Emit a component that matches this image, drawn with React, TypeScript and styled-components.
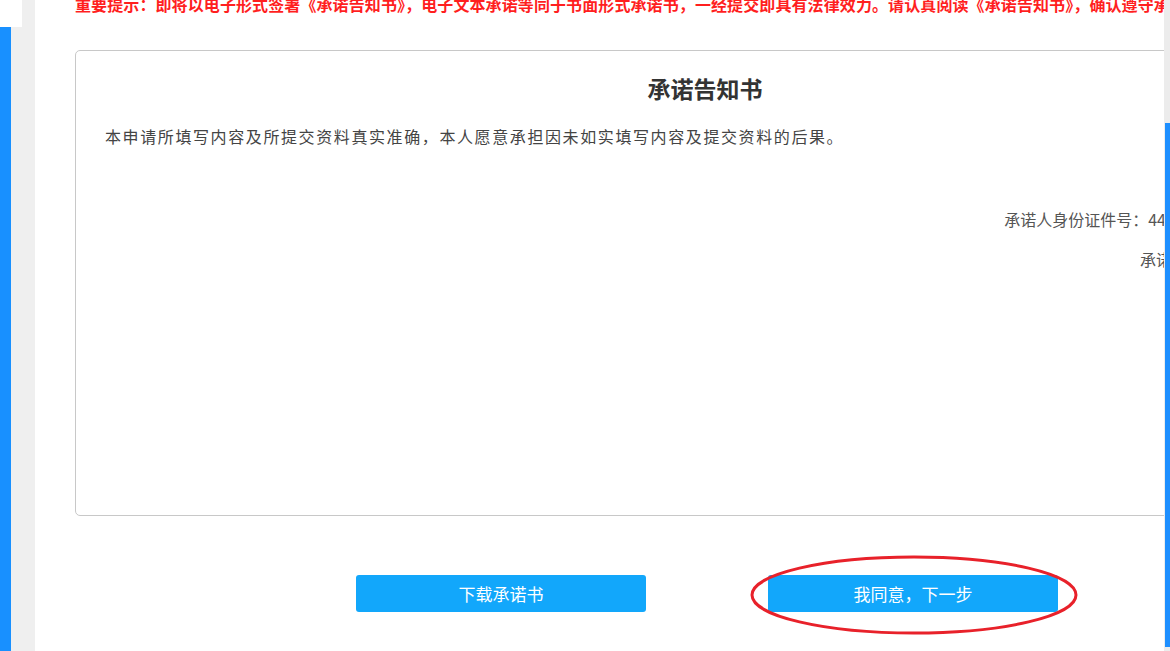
import React from "react";
import styled, { createGlobalStyle } from "styled-components";

const GlobalStyle = createGlobalStyle`
  html, body {
    margin: 0;
    padding: 0;
    overflow: hidden;
    background: #fff;
  }
  body {
    font-family: "Noto Sans CJK SC", "Noto Sans", sans-serif;
  }
`;

const Page = styled.div`
  display: flex;
  height: 651px;
  overflow: hidden;
`;

const Sidebar = styled.aside`
  width: 35px;
  flex-shrink: 0;
  display: flex;
  flex-direction: column;
  background-color: #efefef;
`;

const SideTop = styled.div`
  width: 22px;
  height: 27px;
  background-color: #fff;
`;

const SideAccent = styled.div`
  width: 11px;
  flex: 1;
  background-color: #1890ff;
`;

const Main = styled.main`
  position: relative;
  flex: 1;
  min-width: 0;
  background-color: #fff;
  overflow: hidden;
`;

const Content = styled.div`
  width: 1340px;
  padding: 0 40px;
  box-sizing: border-box;
`;

const Notice = styled.div`
  margin-top: -8px;
  height: 58px;
  font-size: 16px;
  line-height: 24px;
  font-weight: 700;
  letter-spacing: 0.1px;
  color: #ff1f1f;
  white-space: nowrap;
`;

const Card = styled.section`
  height: 466px;
  box-sizing: border-box;
  border: 1px solid #c8c8c8;
  border-radius: 5px;
  padding: 0 29px;
`;

const Title = styled.h2`
  margin: 21px 0 0;
  text-align: center;
  font-size: 23px;
  line-height: 32px;
  font-weight: 700;
  color: #333;
`;

const Statement = styled.p`
  margin: 19px 0 0;
  font-size: 16px;
  line-height: 26px;
  letter-spacing: 1.6px;
  color: #444;
`;

const Signature = styled.div`
  margin: 50px -3px 0 0;
  text-align: right;
  font-size: 16px;
  line-height: 40px;
  color: #555;
`;

const Blank = styled.span`
  display: inline-block;
  width: 48px;
`;

const Actions = styled.div`
  display: flex;
  justify-content: center;
  gap: 122px;
  margin-top: 59px;
  padding-left: 4px;
`;

const ActionButton = styled.button`
  width: 290px;
  height: 37px;
  border: none;
  border-radius: 3px;
  background-color: #12a7fb;
  color: #fff;
  font-family: "Noto Sans CJK SC", sans-serif;
  font-size: 17px;
  cursor: pointer;
`;

const Highlight = styled.svg`
  position: absolute;
  left: 715px;
  top: 555px;
  pointer-events: none;
`;

const Scrollbar = styled.div`
  width: 6px;
  flex-shrink: 0;
  background-color: #ececec;
  padding-top: 123px;
  box-sizing: border-box;
`;

const Thumb = styled.div`
  width: 5px;
  margin-left: 1px;
  height: 524px;
  background-color: #1e8fff;
`;

const App: React.FC = () => {
  return (
    <>
      <GlobalStyle />
      <Page>
        <Sidebar>
          <SideTop />
          <SideAccent />
        </Sidebar>
        <Main>
          <Content>
            <Notice>
              重要提示：即将以电子形式签署《承诺告知书》，电子文本承诺等同于书面形式承诺书，一经提交即具有法律效力。请认真阅读《承诺告知书》，确认遵守承诺的各项内容。
            </Notice>
            <Card>
              <Title>承诺告知书</Title>
              <Statement>
                本申请所填写内容及所提交资料真实准确，本人愿意承担因未如实填写内容及提交资料的后果。
              </Statement>
              <Signature>
                <div>承诺人身份证件号：441302199001011234</div>
                <div>
                  承诺人（签字）：<Blank />
                </div>
              </Signature>
            </Card>
            <Actions>
              <ActionButton>下载承诺书</ActionButton>
              <ActionButton>我同意，下一步</ActionButton>
            </Actions>
          </Content>
          <Highlight width="328" height="80" viewBox="0 0 328 80">
            <ellipse
              cx="164"
              cy="40"
              rx="162"
              ry="38"
              fill="none"
              stroke="#e8212a"
              strokeWidth="3"
            />
          </Highlight>
        </Main>
        <Scrollbar>
          <Thumb />
        </Scrollbar>
      </Page>
    </>
  );
};

export default App;
